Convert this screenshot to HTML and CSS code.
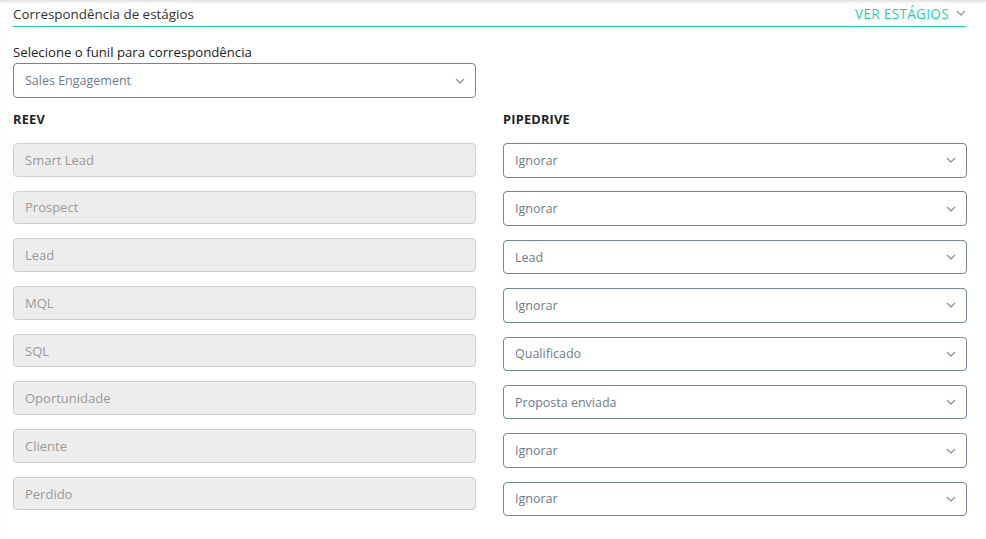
FILE: index.html
```html
<!DOCTYPE html>
<html lang="pt-BR">
<head>
    <meta charset="UTF-8">
    <meta name="viewport" content="width=device-width, initial-scale=1.0">
    <title>Correspondência de estágios</title>
    <link rel="stylesheet" href="styles.css">
</head>
<body>
    <div class="page">
        <div class="section-header">
            <span class="section-title">Correspondência de estágios</span>
            <span class="toggle">VER ESTÁGIOS
                <svg class="chev chev-gray" viewBox="0 0 10 6" width="10" height="6"><path d="M1 1l4 4 4-4" fill="none" stroke="#9aa3ab" stroke-width="1.6"/></svg>
            </span>
        </div>

        <div class="funnel">
            <label class="funnel-label">Selecione o funil para correspondência</label>
            <div class="select">
                <span>Sales Engagement</span>
                <svg class="chev" viewBox="0 0 10 6" width="10" height="6"><path d="M1 1l4 4 4-4" fill="none" stroke="#8b96a1" stroke-width="1.4"/></svg>
            </div>
        </div>

        <div class="columns">
            <div class="col col-left">
                <div class="col-title">REEV</div>
                <div class="stage">Smart Lead</div>
                <div class="stage">Prospect</div>
                <div class="stage">Lead</div>
                <div class="stage">MQL</div>
                <div class="stage">SQL</div>
                <div class="stage">Oportunidade</div>
                <div class="stage">Cliente</div>
                <div class="stage">Perdido</div>
            </div>
            <div class="col col-right">
                <div class="col-title">PIPEDRIVE</div>
                <div class="select pick"><span>Ignorar</span><svg class="chev" viewBox="0 0 10 6" width="10" height="6"><path d="M1 1l4 4 4-4" fill="none" stroke="#8b96a1" stroke-width="1.4"/></svg></div>
                <div class="select pick"><span>Ignorar</span><svg class="chev" viewBox="0 0 10 6" width="10" height="6"><path d="M1 1l4 4 4-4" fill="none" stroke="#8b96a1" stroke-width="1.4"/></svg></div>
                <div class="select pick"><span>Lead</span><svg class="chev" viewBox="0 0 10 6" width="10" height="6"><path d="M1 1l4 4 4-4" fill="none" stroke="#8b96a1" stroke-width="1.4"/></svg></div>
                <div class="select pick"><span>Ignorar</span><svg class="chev" viewBox="0 0 10 6" width="10" height="6"><path d="M1 1l4 4 4-4" fill="none" stroke="#8b96a1" stroke-width="1.4"/></svg></div>
                <div class="select pick"><span>Qualificado</span><svg class="chev" viewBox="0 0 10 6" width="10" height="6"><path d="M1 1l4 4 4-4" fill="none" stroke="#8b96a1" stroke-width="1.4"/></svg></div>
                <div class="select pick"><span>Proposta enviada</span><svg class="chev" viewBox="0 0 10 6" width="10" height="6"><path d="M1 1l4 4 4-4" fill="none" stroke="#8b96a1" stroke-width="1.4"/></svg></div>
                <div class="select pick"><span>Ignorar</span><svg class="chev" viewBox="0 0 10 6" width="10" height="6"><path d="M1 1l4 4 4-4" fill="none" stroke="#8b96a1" stroke-width="1.4"/></svg></div>
                <div class="select pick"><span>Ignorar</span><svg class="chev" viewBox="0 0 10 6" width="10" height="6"><path d="M1 1l4 4 4-4" fill="none" stroke="#8b96a1" stroke-width="1.4"/></svg></div>
            </div>
        </div>
    </div>
</body>
</html>
```
FILE: styles.css
```css
body {
    margin: 0;
    font-family: 'Open Sans', Arial, sans-serif;
    color: #333;
    background-color: #fff;
}

.page {
    min-height: 539px;
    padding: 0 19px 0 13px;
    box-shadow: inset 0 4px 4px -3px rgba(0,0,0,0.18);
}

.section-header {
    display: flex;
    justify-content: space-between;
    align-items: center;
    height: 25px;
    padding-top: 1px;
    margin-right: 1px;
    border-bottom: 1.5px solid #1fd3a6;
}

.section-title {
    font-size: 13.4px;
    color: #333;
}

.toggle {
    display: flex;
    align-items: center;
    gap: 7px;
    font-size: 13.6px;
    letter-spacing: 0.3px;
    color: #1fd3a6;
}

.chev-gray {
    margin-top: -2px;
}

.funnel {
    width: 463px;
    margin-top: 16px;
}

.funnel-label {
    display: block;
    font-size: 13.2px;
    color: #222;
    line-height: 18px;
    margin-bottom: 2px;
}

.select {
    display: flex;
    justify-content: space-between;
    align-items: center;
    box-sizing: border-box;
    height: 35px;
    padding: 0 10px 0 11px;
    border: 1px solid #738597;
    border-radius: 4px;
    font-size: 12.5px;
    color: #6e7c8a;
}

.columns {
    display: flex;
    gap: 27px;
    margin-top: 12px;
}

.col {
    width: 463px;
    display: flex;
    flex-direction: column;
}

.col-right {
    width: 464px;
}

.col-title {
    font-size: 12.8px;
    font-weight: bold;
    letter-spacing: 0.2px;
    color: #222;
    height: 18px;
    line-height: 18px;
    margin-bottom: 15px;
}

.col-left .stage {
    box-sizing: border-box;
    height: 33.5px;
    margin-bottom: 14.2px;
    padding-left: 11px;
    display: flex;
    align-items: center;
    background-color: #ededed;
    border: 1px solid #cfcfcf;
    border-radius: 4px;
    font-size: 13px;
    color: #9a9a9a;
}

.col-right .pick {
    height: 34.5px;
    margin-bottom: 13.9px;
}
```
